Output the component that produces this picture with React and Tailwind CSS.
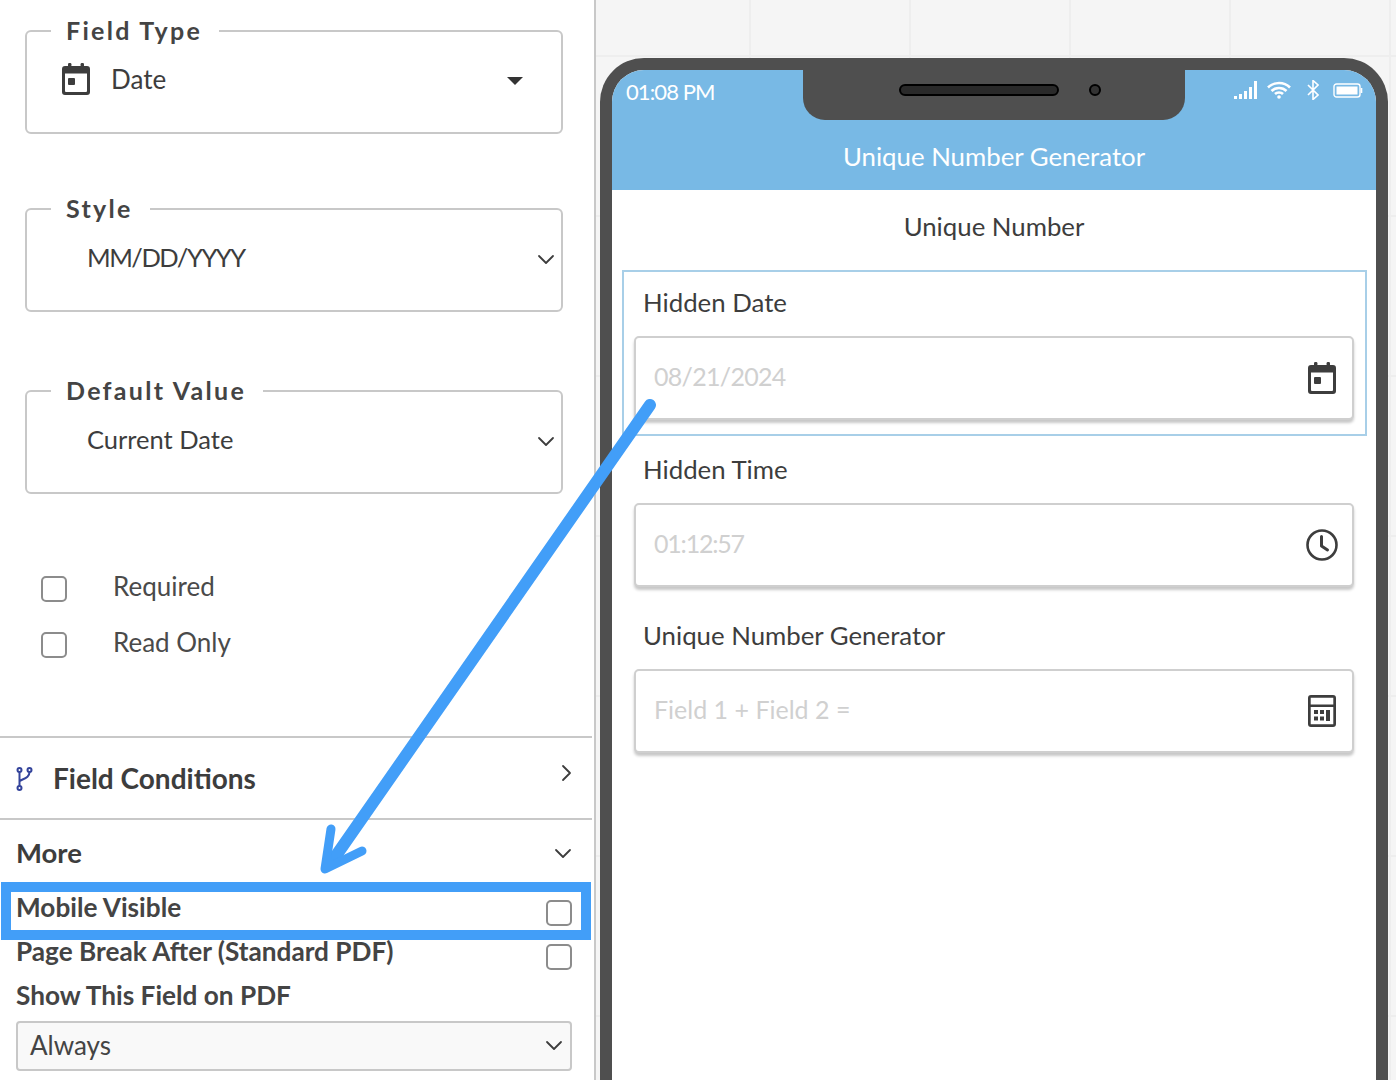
const font = "font-['Lato','Liberation_Sans',sans-serif]";

function CalendarIcon({ className }) {
  return (
    <svg viewBox="0 0 28 32" className={className} fill="#3d3d3d">
      <rect x="6" y="0" width="3.4" height="6" rx="1.2" />
      <rect x="18.6" y="0" width="3.4" height="6" rx="1.2" />
      <path d="M3 3h22a3 3 0 0 1 3 3v23a3 3 0 0 1-3 3H3a3 3 0 0 1-3-3V6a3 3 0 0 1 3-3zm0 7.5V28a1 1 0 0 0 1 1h20a1 1 0 0 0 1-1V10.500z" fillRule="evenodd" />
      <rect x="6" y="15" width="7" height="7" rx="1" />
    </svg>
  );
}

function ClockIcon({ className }) {
  return (
    <svg viewBox="0 0 32 32" className={className} fill="none" stroke="#3d3d3d" strokeWidth="2.600" strokeLinecap="round" strokeLinejoin="round">
      <circle cx="16" cy="16" r="14.500" />
      <path d="M15.500 7.500V17l6 4" strokeWidth="3" />
    </svg>
  );
}

function CalculatorIcon({ className }) {
  return (
    <svg viewBox="0 0 28 32" className={className} fill="#3d3d3d">
      <path d="M3 0h22a3 3 0 0 1 3 3v26a3 3 0 0 1-3 3H3a3 3 0 0 1-3-3V3a3 3 0 0 1 3-3zm-.300 2.700v6.800h22.600V2.700zm0 9.300v17.300h22.600V12z" fillRule="evenodd" />
      <rect x="6" y="15" width="4" height="4" />
      <rect x="12" y="15" width="4" height="4" />
      <rect x="18" y="15" width="4" height="11" />
      <rect x="6" y="21.500" width="4" height="4" />
      <rect x="12" y="21.500" width="4" height="4" />
    </svg>
  );
}

function Chevron({ dir = "down", className }) {
  const d = dir === "down" ? "M2 2l7 7 7-7" : "M2 2l7 7-7 7";
  return (
    <svg viewBox="0 0 18 18" className={className} fill="none" stroke="#3d3d3d" strokeWidth="1.800" strokeLinecap="round" strokeLinejoin="round">
      <path d={d} />
    </svg>
  );
}

function BranchIcon() {
  return (
    <svg viewBox="0 0 16 24" className="w-[17px] h-[24px] mt-[2px]" fill="none" stroke="#34449b" strokeWidth="2">
      <circle cx="3" cy="3" r="2" />
      <circle cx="13" cy="3" r="2" />
      <circle cx="3" cy="21" r="2" />
      <path d="M3 5v14M13 5c0 5-4 6-10 9" />
    </svg>
  );
}

function Checkbox() {
  return <div className="w-[26px] h-[26px] rounded-[5px] border-2 border-[#8c8c8c] bg-white shrink-0" />;
}

function LegendBox({ title, children }) {
  return (
    <fieldset className="h-[118px] mx-[25px] w-[538px] rounded-[6px] border-2 border-[#c8c8c8] px-[26px]">
      <legend className="-ml-[2px] px-[16px] text-[25px] leading-[30px] font-bold text-[#444444] tracking-[2.300px]">
        <span className="block -translate-y-[1px] -translate-x-[1px]">{title}</span>
      </legend>
      {children}
    </fieldset>
  );
}

function SelectRow({ label, track }) {
  return (
    <div className="flex items-center justify-between pl-[34px] h-[46px] -mr-[20px] mt-[12px]">
      <span className={`mb-[3px] text-[25.500px] text-[#3d3d3d] ${track}`}>{label}</span>
      <Chevron className="w-[18px] h-[18px] mt-[8px]" />
    </div>
  );
}

function CheckRow({ label }) {
  return (
    <div className="flex items-center gap-[46px] h-[56px] pl-[41px]">
      <div className="mt-[4px]"><Checkbox /></div>
      <span className="mb-[2px] text-[26px] text-[#4a4a4a]">{label}</span>
    </div>
  );
}

function Sidebar() {
  return (
    <aside className="w-[596px] h-full shrink-0 bg-white border-r-[2px] border-[#c8c8c8] pr-[2px] flex flex-col">
      <div className="pt-[16px]">
        <LegendBox title="Field Type">
          <div className="flex items-center h-[40px] pl-[9px] pr-[12px] mt-[13px]">
            <CalendarIcon className="w-[28px] h-[32px]" />
            <span className="ml-[21px] text-[26px] text-[#3d3d3d]">Date</span>
            <div className="ml-auto mt-[3px] w-0 h-0 border-x-[8px] border-t-[8px] border-x-transparent border-t-[#333333]" />
          </div>
        </LegendBox>
      </div>
      <div className="pt-[60px]">
        <LegendBox title="Style">
          <SelectRow label="MM/DD/YYYY" track="tracking-[-1.500px]" />
        </LegendBox>
      </div>
      <div className="pt-[64px]">
        <LegendBox title="Default Value">
          <SelectRow label="Current Date" />
        </LegendBox>
      </div>
      <div className="pt-[65px]">
        <CheckRow label="Required" />
        <CheckRow label="Read Only" />
      </div>
      <div className="mt-[65px] w-full h-[84px] border-y-2 border-[#c8c8c8] flex items-center pl-[16px] pr-[13px]">
        <BranchIcon />
        <span className="ml-[20px] text-[28px] font-bold text-[#3d3d3d]">Field Conditions</span>
        <Chevron dir="right" className="ml-auto w-[18px] h-[18px] mb-[10px]" />
      </div>
      <div className="flex items-center justify-between h-[62px] pt-[4px] pl-[16px] pr-[20px]">
        <span className="text-[27.500px] font-bold text-[#3d3d3d]">More</span>
        <Chevron className="w-[18px] h-[18px] mt-[8px]" />
      </div>
      <div className="ml-[1px] w-[590px] h-[58px] border-[10px] border-[#429ef8] flex justify-between pl-[5px] pr-[9px]">
        <span className="text-[26.200px] font-bold leading-[30px] text-[#444444]">Mobile Visible</span>
        <div className="mt-[8px]"><Checkbox /></div>
      </div>
      <div className="flex justify-between pl-[16px] pr-[20px] h-[44px]">
        <span className="text-[26.200px] font-bold leading-[30px] -mt-[4px] text-[#444444]">Page Break After (Standard PDF)</span>
        <div className="mt-[4px]"><Checkbox /></div>
      </div>
      <div className="pl-[16px] h-[37px] text-[26.200px] font-bold leading-[30px] text-[#444444] -mt-[4px]">Show This Field on PDF</div>
      <div className="ml-[16px] w-[556px] h-[50px] rounded-[4px] border-2 border-[#c8c8c8] bg-[#f9f9f9] flex items-center justify-between pl-[12px] pr-[7px] mt-[4px]">
        <span className="mb-[2px] text-[26px] text-[#444444]">Always</span>
        <Chevron className="w-[18px] h-[18px] mt-[5px]" />
      </div>
    </aside>
  );
}

function StatusIcons() {
  return (
    <div className="flex items-center pr-[13px] pt-[10px]">
      <svg viewBox="0 0 23 18" className="w-[23px] h-[18px]" fill="white">
        <rect x="0" y="15" width="3" height="3" />
        <rect x="5" y="13" width="3" height="5" />
        <rect x="10" y="10" width="3" height="8" />
        <rect x="15" y="6" width="3" height="12" />
        <rect x="20" y="0" width="3" height="18" />
      </svg>
      <svg viewBox="0 0 24 18" className="ml-[10px] w-[24px] h-[18px]" fill="none" stroke="white" strokeWidth="2.600">
        <path d="M1 6.500c6-6 16-6 22 0M4.500 10c4-4 11-4 15 0M8 13c2-2 6-2 8 0" />
        <circle cx="12" cy="16" r="1.800" fill="white" stroke="none" />
      </svg>
      <svg viewBox="0 0 12 20" className="ml-[16px] w-[12px] h-[20px]" fill="none" stroke="white" strokeWidth="1.600">
        <path d="M1 5l10 10-5 4.500V.500L11 5 1 15" />
      </svg>
      <svg viewBox="0 0 30 15" className="ml-[14px] w-[30px] h-[15px]" fill="none">
        <rect x="1" y="1" width="26" height="13" rx="2.500" stroke="white" strokeWidth="1.400" />
        <rect x="3.500" y="3.500" width="21" height="8" fill="white" />
        <path d="M28.500 5v5" stroke="white" strokeWidth="1.600" />
      </svg>
    </div>
  );
}

function Notch() {
  return (
    <div className="w-[382px] h-[50px] shrink-0 bg-[#4f4f4f] rounded-b-[22px] flex items-start pt-[14px] pl-[96px]">
      <div className="w-[160px] h-[12px] rounded-full bg-[#2a2a2a] border-2 border-black" />
      <div className="ml-[30px] w-[12px] h-[12px] rounded-full bg-[#333333] border-2 border-black" />
    </div>
  );
}

function Field({ label, value, icon, track }) {
  return (
    <div>
      <div className="pl-[9px] text-[25.800px] leading-[30px] text-[#3d3d3d]">{label}</div>
      <div className="mt-[19px] h-[84px] rounded-[5px] border-2 border-[#cfcfcf] shadow-[0_3px_3px_rgba(0,0,0,0.22)] bg-white flex items-center justify-between pl-[18px] pr-[16px]">
        <span className={`mb-[2px] text-[25px] text-[#d0d0d0] ${track}`}>{value}</span>
        {icon}
      </div>
    </div>
  );
}

function Phone() {
  return (
    <div className="mt-[58px] ml-[4px] w-[788px] h-[1100px] rounded-t-[44px] border-[12px] border-b-0 border-[#4f4f4f] bg-white overflow-hidden">
      <div className="h-[120px] bg-[#78b9e5] rounded-t-[30px]">
        <div className="flex justify-between h-[50px]">
          <div className="w-[191px] pl-[14px] pt-[8px] text-[22px] leading-[28px] tracking-[-0.900px] text-white">01:08 PM</div>
          <Notch />
          <div className="w-[191px] flex justify-end items-start"><StatusIcons /></div>
        </div>
        <div className="text-center text-white text-[25.800px] leading-[30px] mt-[21px]">Unique Number Generator</div>
      </div>
      <div className="pt-[21px] text-center text-[25.800px] leading-[30px] text-[#3d3d3d]">Unique Number</div>
      <div className="mt-[29px] ml-[10px] mr-[9px] h-[166px] border-2 border-[#a8cfe8] pt-[15px] pl-[10px] pr-[11px]">
        <Field label="Hidden Date" value="08/21/2024" track="tracking-[-0.700px]" icon={<CalendarIcon className="w-[28px] h-[32px]" />} />
      </div>
      <div className="ml-[22px] mr-[22px] mt-[18px] flex flex-col gap-[33px]">
        <Field label="Hidden Time" value="01:12:57" track="tracking-[-1.200px]" icon={<ClockIcon className="w-[32px] h-[32px] -mr-[2px]" />} />
        <Field label="Unique Number Generator" value="Field 1 + Field 2 =" icon={<CalculatorIcon className="w-[28px] h-[32px]" />} />
      </div>
    </div>
  );
}

export default function App() {
  return (
    <div className={`relative w-[1396px] h-[1080px] overflow-hidden flex bg-white ${font}`}>
      <Sidebar />
      <main className="flex-1 h-full bg-[#f5f5f5] bg-[linear-gradient(to_right,#eeeeee_2px,transparent_2px),linear-gradient(to_bottom,#eeeeee_2px,transparent_2px)] bg-[size:160px_160px] bg-[position:153px_55px]">
        <Phone />
      </main>
      {/* arrow from the hidden date field down to the highlighted row */}
      <svg className="absolute left-0 top-0 pointer-events-none" width="1396" height="1080" fill="none">
        <path d="M650 405L333 860" stroke="#429ef8" strokeWidth="12" strokeLinecap="round" />
        <path d="M331 829L325 869L362 851" stroke="#429ef8" strokeWidth="9" strokeLinecap="round" strokeLinejoin="round" />
      </svg>
    </div>
  );
}
